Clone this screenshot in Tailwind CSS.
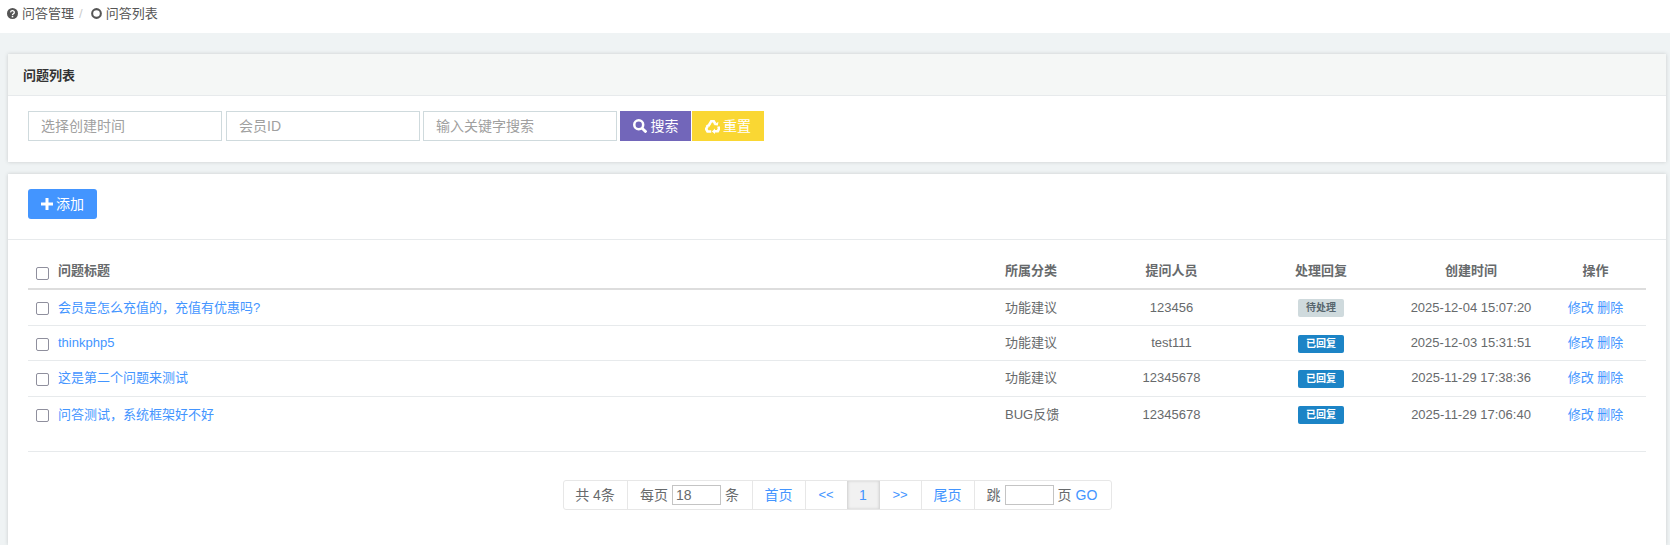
<!doctype html>
<html lang="zh"><head><meta charset="utf-8"><script src="https://cdn.jsdelivr.net/npm/@tailwindcss/browser@4"></script></head>
<body class="bg-[#eff3f4] h-[545px] overflow-hidden font-['Liberation_Sans','Noto_Sans_CJK_SC',sans-serif] text-[13px] text-[#676a6c]">
<div class="h-[33px] bg-white flex items-center pl-[7px] pb-[6px] gap-1 text-[13px] text-[#555]">
  <svg class="w-[11px] h-[11px]" viewBox="0 0 24 24"><circle cx="12" cy="12" r="12" fill="#555"/><path d="M8 9.500a4 3.600 0 1 1 6 3c-1.500 1-2 1.500-2 2.800" fill="none" stroke="#fff" stroke-width="3"/><rect x="10.300" y="17" width="3.400" height="3.400" fill="#fff"/></svg>
  <span>问答管理</span><span class="text-[#ccc] ml-px mr-1">/</span>
  <svg class="w-[11px] h-[11px]" viewBox="0 0 24 24"><circle cx="12" cy="12" r="9.500" fill="none" stroke="#555" stroke-width="4.500"/></svg>
  <span>问答列表</span>
</div>
<section class="mt-[21px] ml-2 mr-1 h-[108px] bg-white shadow-[0_0_4px_rgba(0,0,0,0.16)]">
  <h2 class="h-[42px] bg-[#f5f7f6] border-b border-[#e7eaec] pl-[15px] pt-[3px] flex items-center text-[13px] font-bold text-[#333]">问题列表</h2>
  <div class="flex pl-5 pt-[15px]">
    <div class="w-[194px] h-[30px] border border-[#cfdadd] pl-3 flex items-center text-[#a0a0a0] text-[14px]">选择创建时间</div>
    <div class="w-[194px] h-[30px] border border-[#cfdadd] pl-3 flex items-center text-[#a0a0a0] text-[14px] ml-[4px]">会员ID</div>
    <div class="w-[194px] h-[30px] border border-[#cfdadd] pl-3 flex items-center text-[#a0a0a0] text-[14px] ml-[3px]">输入关键字搜索</div>
    <button class="w-[71px] h-[30px] ml-[3px] bg-[#7266ba] text-white text-[14px] flex items-center justify-center gap-1"><svg class="w-[14px] h-[14px]" viewBox="1 1 22 22" fill="none" stroke="#fff"><circle cx="10" cy="10" r="7" stroke-width="4"/><path d="M15 15l7 7" stroke-width="4.500"/></svg>搜索</button>
    <button class="w-[72px] h-[30px] ml-px bg-[#fad733] text-white text-[14px] flex items-center justify-center gap-[3px]"><svg class="w-[15px] h-[15px]" viewBox="0 0 24 24" fill="#fff"><g fill="none" stroke="#fff" stroke-width="4.200"><path d="M6.500 9.500L10 3.500H14L16.500 8"/><path d="M21.500 12L22.500 15.500L20.500 19.500H15"/><path d="M10 20H4L1.800 16L4.500 11"/></g><path d="M13.500 9.500L20.500 10.500L21.500 4.500zM16 15L11 20L16 24zM1 10.500L7.500 12.500L9.500 6z"/></svg>重置</button>
  </div>
</section>
<section class="mt-3 ml-2 mr-1 h-[371px] bg-white shadow-[0_0_4px_rgba(0,0,0,0.16)]">
  <div class="h-[66px] pl-5 pt-[15px] border-b border-[#e7eaec]">
    <button class="w-[69px] h-[30px] bg-[#4395ff] rounded-[3px] text-white text-[14px] flex items-center justify-center gap-[3px]"><svg class="w-[12px] h-[12px]" viewBox="0 0 12 12" fill="#fff"><path d="M4.500 0h3v4.500H12v3H7.500V12h-3V7.500H0v-3h4.500z"/></svg>添加</button>
  </div>
  <div class="mx-5 mt-[14px] h-[198px] border-b border-[#e7eaec]">
    <table class="w-full table-fixed border-collapse">
      <thead><tr class="h-[35px] border-b-2 border-[#ddd] font-bold text-[#676a6c]">
        <th class="w-[30px] p-0"><input type="checkbox" class="block appearance-none ml-2 mt-[5px] w-[13px] h-[13px] border border-[#8f8f9d] rounded-[2px] bg-white"></th>
        <th class="text-left font-bold pl-0">问题标题</th>
        <th class="w-[93px] text-left font-bold">所属分类</th>
        <th class="w-[147px] font-bold">提问人员</th>
        <th class="w-[152px] font-bold">处理回复</th>
        <th class="w-[148px] font-bold">创建时间</th>
        <th class="w-[101px] font-bold">操作</th>
      </tr></thead>
      <tbody class="text-center">
        <tr class="h-9 border-b border-[#e7eaec]"><td class="p-0"><input type="checkbox" class="block appearance-none ml-2 mt-[3px] w-[13px] h-[13px] border border-[#8f8f9d] rounded-[2px] bg-white"></td><td class="text-left text-[#4395ff]">会员是怎么充值的，充值有优惠吗?</td><td class="text-left">功能建议</td><td>123456</td><td><span class="inline-block w-[46px] h-[18px] leading-[18px] rounded-[2px] bg-[#cfdadd] text-[10px] font-bold text-[#58666e]">待处理</span></td><td>2025-12-04 15:07:20</td><td class="text-[#4395ff]">修改 删除</td></tr>
        <tr class="h-[35px] border-b border-[#e7eaec]"><td class="p-0"><input type="checkbox" class="block appearance-none ml-2 mt-[3px] w-[13px] h-[13px] border border-[#8f8f9d] rounded-[2px] bg-white"></td><td class="text-left text-[#4395ff]">thinkphp5</td><td class="text-left">功能建议</td><td>test111</td><td><span class="inline-block w-[46px] h-[18px] leading-[18px] rounded-[2px] bg-[#1c84c6] text-[10px] font-bold text-white">已回复</span></td><td>2025-12-03 15:31:51</td><td class="text-[#4395ff]">修改 删除</td></tr>
        <tr class="h-9 border-b border-[#e7eaec]"><td class="p-0"><input type="checkbox" class="block appearance-none ml-2 mt-[3px] w-[13px] h-[13px] border border-[#8f8f9d] rounded-[2px] bg-white"></td><td class="text-left text-[#4395ff]">这是第二个问题来测试</td><td class="text-left">功能建议</td><td>12345678</td><td><span class="inline-block w-[46px] h-[18px] leading-[18px] rounded-[2px] bg-[#1c84c6] text-[10px] font-bold text-white">已回复</span></td><td>2025-11-29 17:38:36</td><td class="text-[#4395ff]">修改 删除</td></tr>
        <tr class="h-9"><td class="p-0"><input type="checkbox" class="block appearance-none ml-2 mt-[3px] w-[13px] h-[13px] border border-[#8f8f9d] rounded-[2px] bg-white"></td><td class="text-left text-[#4395ff]">问答测试，系统框架好不好</td><td class="text-left">BUG反馈</td><td>12345678</td><td><span class="inline-block w-[46px] h-[18px] leading-[18px] rounded-[2px] bg-[#1c84c6] text-[10px] font-bold text-white">已回复</span></td><td>2025-11-29 17:06:40</td><td class="text-[#4395ff]">修改 删除</td></tr>
      </tbody>
    </table>
  </div>
  <div class="mt-7 flex justify-center">
    <div class="flex h-[30px] items-center border border-[#e7e7e7] rounded-[3px] whitespace-nowrap text-[14px]">
      <span class="w-[64px] h-full flex items-center justify-center border-r border-[#e7e7e7]">共 4条</span>
      <span class="w-[125px] h-full flex items-center justify-center gap-1 border-r border-[#e7e7e7]">每页<span class="w-[49px] h-[20px] border border-[#c4c4c4] pl-[3px] text-[14px] leading-[18px]">18</span>条</span>
      <span class="w-[53px] h-full flex items-center justify-center border-r border-[#e7e7e7] text-[#4395ff]">首页</span>
      <span class="w-[41px] h-full flex items-center justify-center text-[#4395ff] text-[13px]">&lt;&lt;</span>
      <span class="w-[33px] h-full flex items-center justify-center bg-[#f1f1f1] border-x border-[#d9d9d9] shadow-[inset_0_0_3px_rgba(0,0,0,0.15)] text-[#4395ff]">1</span>
      <span class="w-[42px] h-full flex items-center justify-center border-r border-[#e7e7e7] text-[#4395ff] text-[13px]">&gt;&gt;</span>
      <span class="w-[53px] h-full flex items-center justify-center border-r border-[#e7e7e7] text-[#4395ff]">尾页</span>
      <span class="w-[136px] h-full flex items-center pl-3 gap-1">跳<span class="w-[49px] h-[20px] border border-[#c4c4c4]"></span>页<span class="text-[#4395ff]">GO</span></span>
    </div>
  </div>
</section>
</body></html>
